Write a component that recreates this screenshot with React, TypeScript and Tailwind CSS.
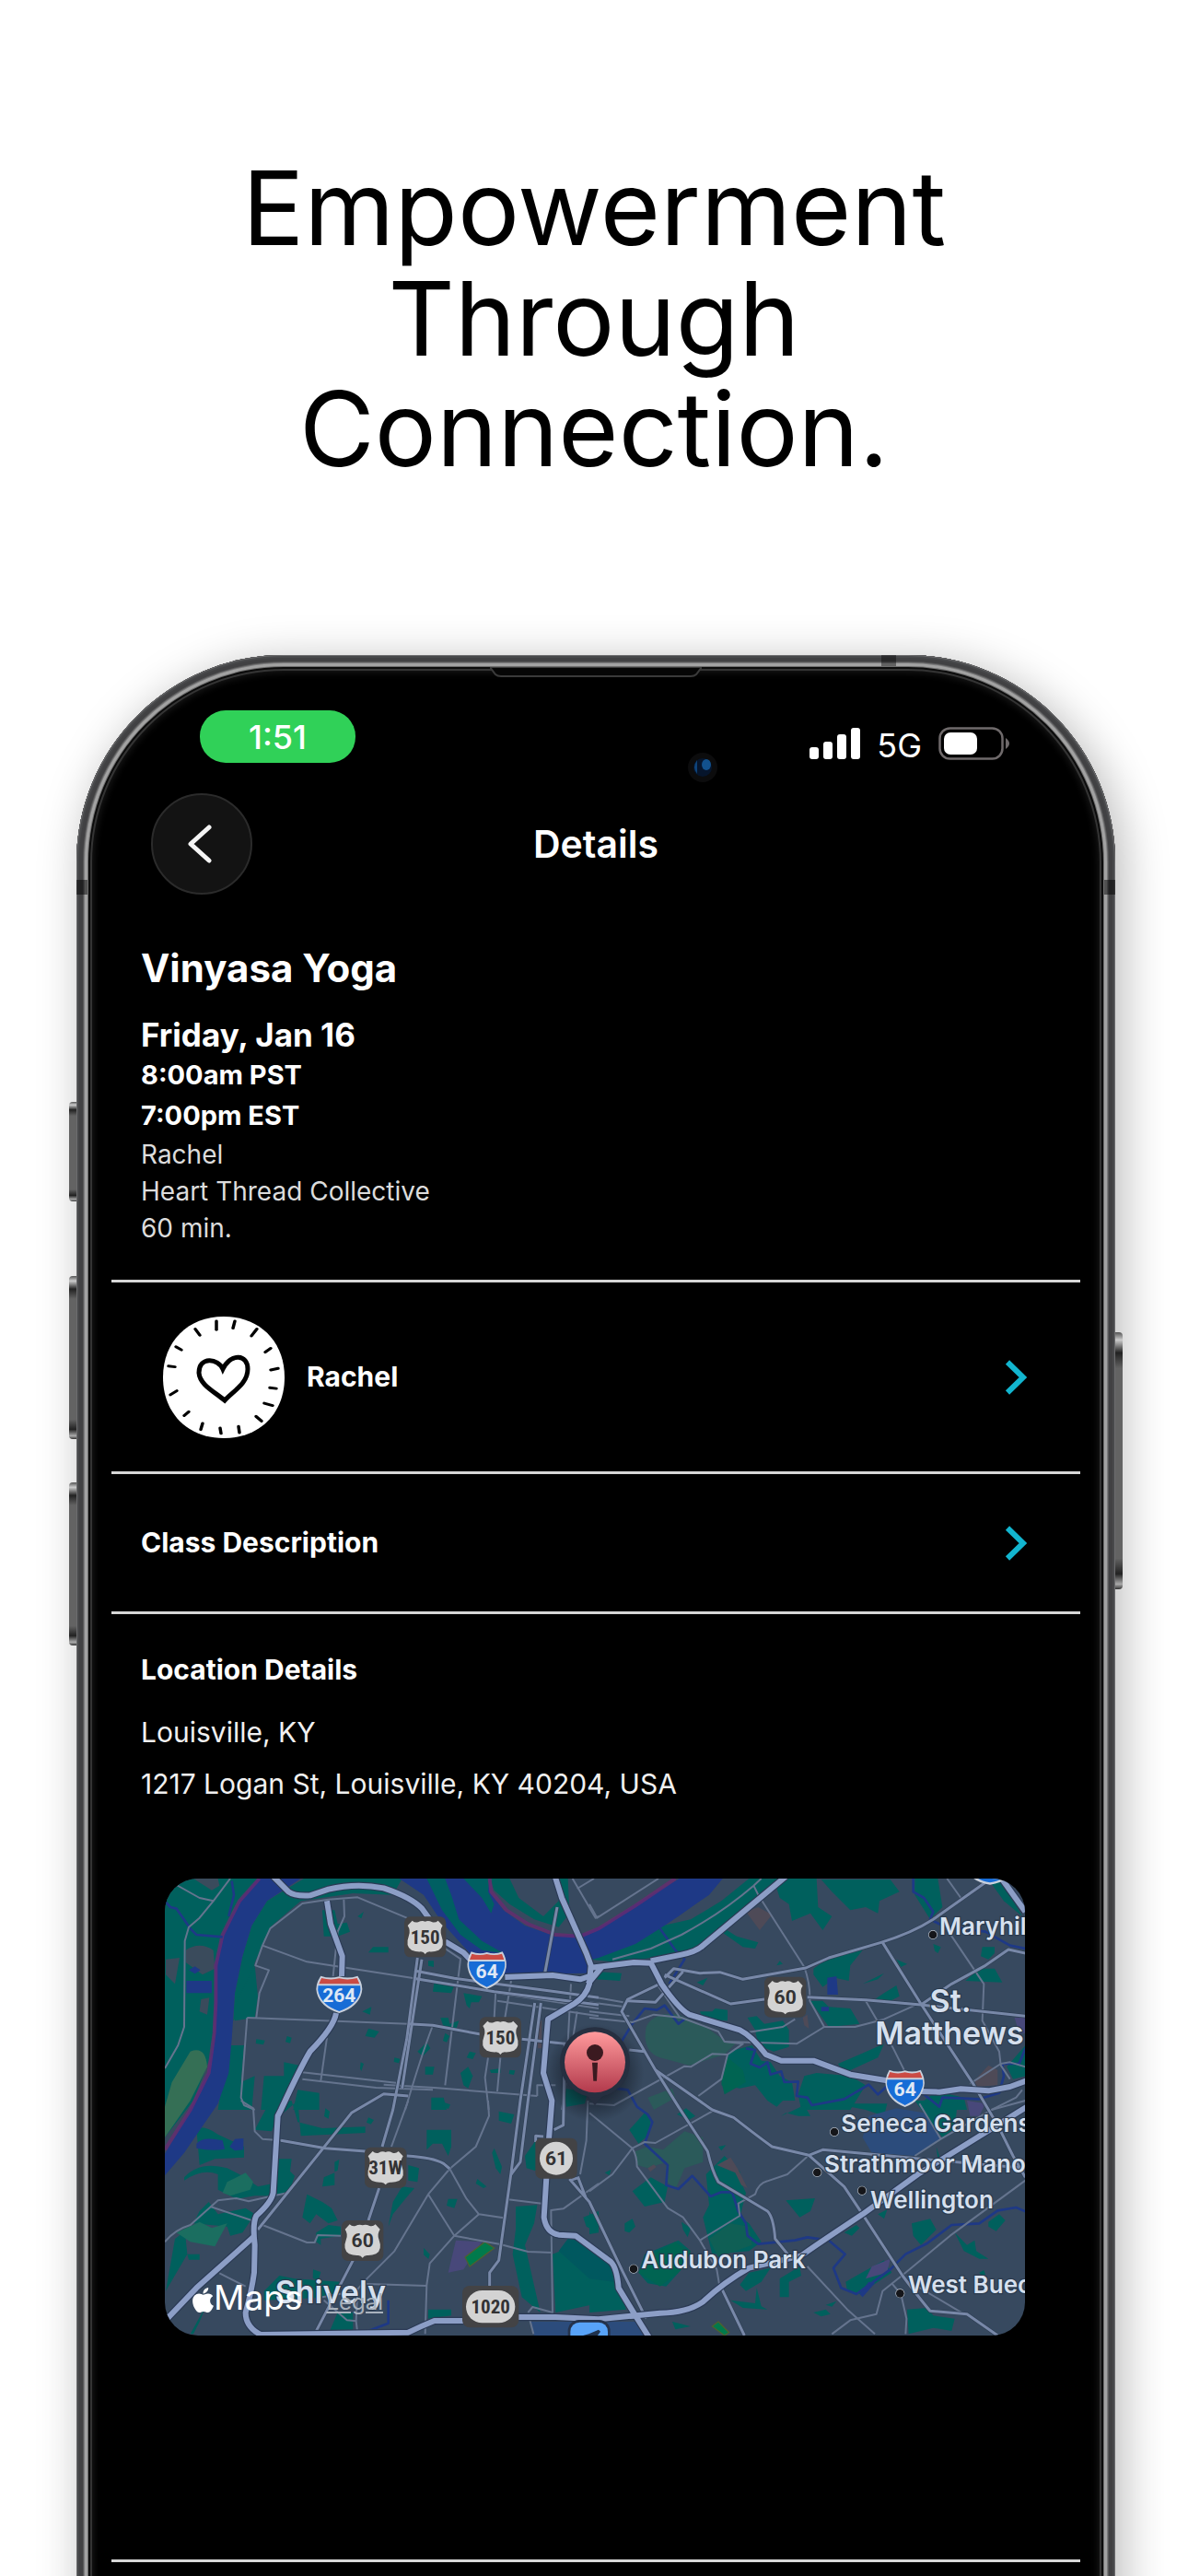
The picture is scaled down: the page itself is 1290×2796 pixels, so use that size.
import type { ReactNode } from "react";
import { FaApple } from "react-icons/fa";

type Point = { x: number; y: number };

const STREETS_NW = [
  "M60,75 L140,120 185,130 L240,57",
  "M185,130 L140,185 105,215 92,260 90,540 70,600 27,675",
  "M815,185 L655,118 560,125 475,138 370,220 345,275 322,340 366,355 335,430 325,510",
  "M345,275 L490,328 L840,382",
  "M610,125 L612,180 590,230 575,375",
  "M295,510 L820,530",
  "M295,510 L275,770 285,795 320,810",
  "M555,575 L535,715",
  "M475,688 L780,722 M475,710 L715,738 L900,745 M740,728 L905,738 L1240,765",
  "M990,320 L940,730",
  "M940,285 L992,320",
  "M898,540 Q860,640 810,810",
  "M1155,390 L1135,510 M1105,420 L1100,510 M1120,640 L1110,750 M1080,640 L1070,705 1082,810",
  "M1110,430 L1440,480 M1110,455 L1440,505 M1350,400 L1340,590 M1370,490 L1320,810",
  "M1355,57 L1430,185 1440,180 M1370,90 L1425,57",
  "M1240,765 L1240,730 1300,730",
];

const STREETS_NE = [
  "M0,140 L25,185 L225,57",
  "M75,320 L200,285 300,240 Q430,170 535,80 L560,57",
  "M535,80 L550,110 700,345 Q720,400 718,455 L765,540 675,595 440,588 420,555 300,510 210,500 140,525 0,510",
  "M500,560 L630,540 670,515",
  "M765,540 L865,540 960,515 1060,470",
  "M900,455 L990,610 1025,680",
  "M440,588 L500,595 450,630 400,628 330,670 310,668 80,795 0,790",
  "M450,630 L430,710 355,765",
  "M220,400 L295,510",
  "M1165,57 L1210,120 M1150,200 L1285,400 1280,520 1335,620 1340,665 1370,710",
  "M1240,725 L1340,660 1370,655 1420,670",
  "M1310,810 L1390,770 1410,745",
  "M0,440 L110,460 M0,460 L115,475 M0,490 L130,505",
];

const STREETS_SW = [
  "M275,0 L315,25 320,100 345,125 405,130",
  "M27,460 Q60,420 110,405 L200,325 260,318 300,328 380,310 430,300",
  "M175,345 L310,390 M345,405 L490,462 515,462 525,438 600,440",
  "M205,562 L290,605",
  "M820,0 L765,150",
  "M1080,0 L1083,50 1040,150 955,222 885,305 775,490 685,580 650,620 540,640",
  "M955,222 L1010,320 1050,370 1130,382",
  "M1050,370 L970,440 890,530 880,600 875,760",
  "M885,305 L970,440 1120,468 1210,492 1290,495",
  "M685,597 L880,603",
  "M1145,322 L1255,335 M1285,355 L1290,690 1225,672 1210,690",
  "M1285,357 L1325,352 1440,270",
  "M545,650 L620,715 650,718 655,610 M650,718 L655,760",
  "M1405,0 L1400,130 1380,240",
  "M1215,710 L1228,760",
];

const STREETS_SE = [
  "M0,40 L140,155 Q155,180 155,215 L255,350 305,380 360,455 415,550 425,610",
  "M0,295 L75,240 140,155 180,135 215,138 400,35",
  "M360,455 L490,375 485,335 540,305 Q550,270 580,262 L645,240 715,178",
  "M1075,10 L1145,125 1060,180 M1145,125 L1310,30 1420,0",
  "M790,760 L850,715 935,695 955,620 1030,560 1175,440 L1420,260",
  "M710,540 L840,680 930,760",
  "M985,595 L1015,630 1033,710 1030,760",
  "M1060,600 L1220,695",
];

const AVENUES = [
  "M850,315 L815,580 770,810 L735,930",
  "M864,320 L800,740",
  "M840,357 L970,382 1300,425 1440,445",
  "M845,383 L1100,425 1440,468",
  "M820,530 L900,535 1060,565 M1190,580 L1330,595",
  "M1232,462 L1185,780 1155,1015 1115,1300 1085,1340 1085,1385",
  "M1252,462 L1210,780 1185,980 1155,1020",
  "M1305,150 L1265,365",
  "M725,1065 L690,1170 M640,1300 L515,1540",
  "M820,765 L740,758 635,820 L330,1200",
  "M405,910 L550,935 680,945 M815,960 Q900,965 935,985 L955,1002",
  "M1330,590 L1325,860 1295,875 M1235,915 L1235,895 1260,897",
  "M1655,370 L1870,465 1980,450 M2120,443 L2310,452 2490,468 2830,505",
  "M1655,380 L1685,350 1770,365 1835,362 1910,385 2115,348 2190,315 2360,265 Q2460,235 2530,190 L2700,70",
  "M2365,265 L2490,465 2660,725 2740,860 2790,960 2830,1030",
  "M2490,468 L2590,400 2700,340 2775,288 2830,300",
  "M1650,395 L1535,450 1515,490 1625,680 1700,800 1795,945 Q1810,1010 1830,1045 L1990,1140 Q2010,1160 2015,1230 L2060,1285",
  "M1625,680 L1810,810 1880,835 Q1950,890 2005,930 L2125,958 2170,940 2490,970 2830,1000",
  "M1535,455 L1625,460 1715,360",
  "M2125,958 L2240,1060 2300,1150 2430,1350 Q2490,1430 2520,1465 L2640,1475 2740,1545",
  "M1345,1035 L1410,1110 1520,1340 1595,1490 M1375,1035 L1400,1100 M1345,1040 L1378,1030",
  "M1840,1390 L1915,1545 M1540,615 L1590,620",
];

const HIGHWAYS = [
  "M380,50 L430,100 Q450,115 500,112 L560,92 Q650,70 740,88 Q830,118 865,155 L890,190",
  "M940,262 L1000,298 1030,330 M1135,378 L1290,372 1380,385 1410,375",
  "M555,130 L567,205 605,310 603,375",
  "M585,495 Q578,540 500,620 Q470,670 405,810 L395,830 380,1080 Q375,1110 325,1155 Q312,1180 320,1250 L318,1340 Q310,1400 290,1470 Q290,1520 345,1545",
  "M30,1495 L130,1390 320,1220",
  "M340,1542 L820,1535 Q860,1515 905,1497 L1000,1497 M1175,1485 L1300,1485 1440,1492 1560,1480",
  "M1298,50 L1320,120 1400,300 1415,340 1410,400 Q1400,440 1360,465 L1275,515 1260,690 1288,780 1278,905",
  "M1270,1030 L1262,1160 Q1270,1210 1310,1217 L1365,1220 1480,1305 Q1500,1325 1505,1390 L1560,1480 1610,1560",
  "M1410,348 L1555,330 1610,332 Q1625,360 1645,400 Q1700,480 1735,500 L1900,550 Q1940,570 1985,630 L2035,650 2140,650 2260,695 2380,715",
  "M1405,400 L1450,345 M1610,325 L1710,305 Q1760,295 1780,275 L2050,50",
  "M2490,750 L2550,752 2620,742 2710,748 2780,735 2835,715",
  "M2755,60 L2830,165",
  "M1540,1482 L1640,1472 Q1730,1470 1780,1435 Q1850,1370 1930,1325 L2100,1285 Q2150,1250 2210,1210 L2300,1150 2480,1020 2835,800",
];

const CREEKS = [
  "M27,130 L45,150 65,155 110,220 130,240 215,247",
  "M245,65 L252,110 235,180",
  "M1470,660 L1550,530 1590,480 1630,485 1655,470 1700,530 1720,515",
  "M1640,220 L1690,290 1720,320 1670,400",
  "M1495,740 L1535,745 1565,800 1600,825 1615,850 1590,920 1665,990 1660,1055 1700,1068 1745,1025 1805,1092 1840,1078 1875,1078 1895,1140 1920,1180 1925,1220 1960,1247 2080,1235 2120,1225 2190,1235 2243,1280 2205,1325 2230,1390 2280,1410 2390,1330 2440,1280 2510,1245 2590,1185 2680,1180 2740,1138 2800,1128 2835,1143",
  "M1920,610 L1950,615 1935,660 1965,672 1990,655 2000,695 2035,685 2045,720 2090,718 2085,765 2120,770 2135,795 2240,775 2320,728 2350,760 2400,715",
  "M2465,57 L2465,100 2500,120 2530,165 2520,190 2560,210 2700,230 2780,275 2830,285",
  "M2500,760 L2550,800 2560,770 2680,775 2745,755 2760,700 2755,660 2810,660 2830,610",
  "M690,1530 L755,1505 755,1430",
];

const PARKS_NW = [
  "M27,57 H335 L270,130 215,240 190,340 190,460 182,620 120,780 27,900 Z",
  "M480,57 H800 L770,110 640,105 470,130 370,215 320,330 300,430 270,500 250,520 255,430 280,310 310,210 360,130 Z",
  "M330,440 L320,510 255,520 260,460 320,340 Z",
  "M1085,57 H1340 L1345,170 1310,215 1230,190 1150,140 1100,95 Z",
  "M905,390 L970,405 960,430 900,425 Z",
  "M925,510 l25,0 5,20 30,-10 -10,30 -40,-10 z",
  "M1000,430 L1060,440 1050,460 1025,460 1020,480 1010,470 Z",
  "M230,600 L285,600 275,720 320,700 310,810 200,810 Z",
  "M350,700 L415,700 415,655 465,665 430,770 410,810 340,810 Z",
  "M460,745 L530,755 530,810 445,810 Z",
  "M705,280 h50 v18 h-65 z",
  "M540,160 l40,0 10,45 30,-5 10,30 -40,15 -45,0 z",
  "M690,545 l35,10 -15,20 -30,-5 z",
  "M850,620 l30,-30 12,20 -25,25 z",
  "M875,670 l30,0 -5,25 -25,0 z",
  "M670,490 l30,-15 -5,25 z",
  "M655,180 l20,-15 -8,22 z",
  "M940,560 l15,10 -10,20 -12,-5 z",
  "M990,690 l25,-20 15,30 -15,40 -15,-10 z",
  "M1085,680 l35,-5 0,15 -30,0 z",
  "M1020,620 l20,5 -10,20 -20,-5 z",
  "M895,770 l40,0 10,40 -50,0 z",
  "M325,580 l28,4 -5,14 -25,-4 z",
  "M425,570 l15,5 -5,18 -15,-4 z",
  "M1150,680 l18,2 -4,14 -16,-3 z",
  "M885,325 l18,0 0,20 -18,-4 z",
  "M1325,740 l80,10 -10,40 -60,10 z",
  "M665,655 l10,5 -8,24 -4,-8 z",
  "M775,640 l18,4 -4,14 -16,-4 z",
];

const PARKS_NE = [
  "M0,320 L240,210 330,190 430,130 520,57 H560 L640,60 510,160 370,270 300,300 100,330 Z",
  "M600,57 H740 L745,150 790,180 760,225 720,170 660,195 650,140 620,120 Z",
  "M755,60 H980 L1010,100 945,130 940,170 900,150 850,160 790,100 Z",
  "M1060,57 H1135 L1150,150 1110,190 1060,110 Z",
  "M440,220 L480,245 550,265 540,285 500,280 430,230 Z",
  "M730,350 L780,315 890,290 850,340 845,390 800,380 760,410 730,370 Z",
  "M720,455 L760,455 780,475 850,480 880,530 780,540 Z",
  "M960,430 L1000,405 1010,440 980,455 930,450 Z",
  "M890,400 L960,365 940,385 Z",
  "M1000,320 l35,15 -20,10 z",
  "M1225,390 L1270,350 1320,350 1345,395 Z",
  "M1120,270 l25,10 -10,20 -10,-8 z",
  "M1280,280 l40,0 0,20 -20,20 -25,-10 z",
  "M515,510 l30,-5 25,25 60,-10 20,30 0,55 -50,15 -50,-20 -10,-50 z",
  "M360,490 L400,490 410,480 450,485 450,520 370,515 Z",
  "M455,620 L530,600 560,650 590,655 620,700 660,720 670,780 630,780 610,800 580,780 540,730 490,740 430,730 Z",
  "M810,660 L880,630 960,595 940,640 830,690 Z",
  "M700,700 L740,690 850,700 900,730 850,810 690,810 680,760 Z",
  "M1090,780 L1130,750 1220,770 1230,810 1080,810 Z",
  "M1360,670 L1420,600 1420,700 1380,710 Z",
  "M350,395 l35,-15 -15,25 z",
  "M610,340 l10,-15 10,10 z",
  "M20,360 l85,5 -5,25 -80,-5 z",
  "M1300,60 L1345,65 1410,180 1350,130 Z",
  "M80,280 L220,230 210,260 100,290 Z",
];

const PARKS_SW = [
  "M27,0 H60 L27,90 Z",
  "M360,20 L390,10 440,0 460,70 540,90 680,85 680,105 470,115 460,0 390,60 375,100 320,95 Z",
  "M130,90 Q160,80 200,110 L285,150 285,185 190,190 140,210 Z",
  "M90,250 Q140,195 230,220 L270,240 330,280 380,270 390,190 440,190 435,230 450,245 435,290 395,310 320,310 260,320 200,290 200,240 Q150,220 90,260 Z",
  "M170,330 L200,370 290,350 320,370 280,430 240,440 230,410 120,400 140,360 Z",
  "M100,420 L60,450 30,620 100,500 95,450 Z",
  "M490,305 L540,330 570,350 590,390 560,400 520,370 500,400 475,380 Z",
  "M520,430 L560,405 600,410 600,440 535,450 535,470 520,460 Z",
  "M545,250 l35,-15 0,40 -40,5 z",
  "M580,200 l15,-8 -5,35 -10,5 z",
  "M880,95 L960,95 960,150 950,180 930,140 900,140 880,160 Z",
  "M820,210 L855,220 850,265 820,260 Z",
  "M800,280 L840,285 810,320 770,370 755,410 770,330 Z",
  "M1115,35 L1165,45 1155,75 1115,65 Z",
  "M1170,345 L1240,340 1230,400 1200,470 1250,690 1190,640 1160,500 1170,420 Z",
  "M1390,380 L1440,360 1440,430 1400,410 Z",
  "M1100,155 l25,60 -5,25 -15,-20 -12,-50 z",
  "M950,320 l30,0 -10,30 -25,-8 z",
  "M510,550 l25,8 -8,30 -18,-10 z",
  "M350,620 L400,570 450,580 600,590 580,640 350,650 Z",
  "M590,690 L640,690 640,760 560,760 Z",
  "M885,680 L960,680 960,700 885,710 Z",
  "M1290,500 L1340,480 1440,490 1440,660 1300,690 Z",
  "M110,760 L160,670 140,720 120,760 Z",
  "M1045,255 l30,25 -10,5 -25,-15 z",
  "M935,5 l22,8 -6,14 -20,-6 z",
  "M1200,180 L1235,130 1240,230 1205,220 Z",
  "M870,480 l20,20 -4,16 -16,-14 z",
  "M690,55 l18,8 -10,14 -14,-6 z",
  "M550,25 l14,10 -4,24 -14,-8 z",
  "M100,500 h40 v18 h-35 z",
];

const PARKS_SE = [
  "M0,360 L30,430 0,435 Z",
  "M130,95 L180,40 200,60 195,110 160,140 Z",
  "M140,295 L200,250 255,280 245,330 180,345 Z",
  "M380,240 L440,180 490,230 500,280 510,300 490,380 520,400 560,460 520,490 400,500 370,380 390,340 Z",
  "M115,400 L140,385 150,410 130,430 115,425 Z",
  "M640,325 L735,318 720,360 685,380 Z",
  "M0,470 L70,530 90,600 120,680 0,690 Z",
  "M160,560 L180,500 290,455 330,490 300,550 250,605 190,595 Z",
  "M625,50 L700,15 720,50 680,50 640,40 Z",
  "M285,45 l30,-20 30,25 -20,12 z",
  "M520,560 L590,545 560,590 510,620 490,600 Z",
  "M620,580 L685,540 690,570 650,590 650,640 620,640 Z",
  "M460,650 L540,660 545,610 560,670 580,680 500,675 Z",
  "M835,590 L870,570 960,520 985,560 880,630 840,620 Z",
  "M1050,400 L1110,385 1130,420 1080,470 1055,440 Z",
  "M1190,430 L1230,470 1255,455 1260,490 1300,515 1270,515 1220,490 Z",
  "M1300,395 l35,-25 20,20 -30,35 -25,-15 z",
  "M1035,680 L1100,675 1120,700 1190,710 1180,750 1120,740 1040,760 Z",
  "M830,430 l40,-25 10,10 -25,25 z",
  "M940,370 l30,-15 -10,30 z",
  "M1060,0 H1200 L1190,90 1150,120 Z",
  "M820,10 H970 L960,50 900,30 850,20 Z",
  "M730,690 l40,-10 15,15 -30,8 z",
  "M770,665 l35,-12 -15,18 z",
  "M1270,560 l15,-8 5,14 -12,5 z",
  "M300,395 l30,20 -10,30 -15,-25 z",
  "M50,235 l20,-10 -5,18 z",
  "M420,150 l25,-5 -15,18 z",
  "M1130,150 l20,60 -15,-20 z",
  "M270,720 l60,15 -50,10 z",
];

const CLAY_PATCHES = [
  "M1920,165 L1960,150 2005,175 1965,225 Z",
  "M2665,715 L2710,665 2740,680 2740,730 2670,735 Z",
  "M2105,510 l15,-10 5,45 -15,-10 z",
  "M1825,990 l45,-25 25,40 30,60 -20,-10 -20,-40 z",
  "M1600,1000 l20,-12 8,8 -20,16 z",
  "M1245,520 l10,0 0,90 -14,0 z",
];

const TOWNS = [
  { name: "Maryhill Estates", dot: { x: 2529, y: 240 }, text: { x: 2550, y: 241 } },
  { name: "Seneca Gardens", dot: { x: 2208, y: 882 }, text: { x: 2230, y: 882 } },
  { name: "Strathmoor Manor", dot: { x: 2152, y: 1014 }, text: { x: 2175, y: 1013 } },
  { name: "Wellington", dot: { x: 2298, y: 1073 }, text: { x: 2325, y: 1132 } },
  { name: "Audubon Park", dot: { x: 1554, y: 1328 }, text: { x: 1579, y: 1327 } },
  { name: "West Buechel", dot: { x: 2422, y: 1408 }, text: { x: 2448, y: 1407 } },
];

const TICKS = [
  "M58,6 l0,11",
  "M78,6 l-2,9",
  "M102,16 l-6,9",
  "M117,41 l-6,5",
  "M125,67 l-8,2",
  "M123,93 l-7,-1",
  "M119,115 l-9,-3",
  "M107,135 l-6,-6",
  "M83,150 l-1,-8",
  "M63,151 l-1,-7",
  "M41,146 l2,-8",
  "M23,128 l5,-5",
  "M8,101 l7,-5",
  "M6,64 l7,1",
  "M14,39 l6,4",
  "M35,16 l5,8",
];

function Strokes({ paths, color, width }: { paths: string[]; color: string; width: number }) {
  return (
    <g fill="none" stroke={color} strokeWidth={width} strokeLinejoin="round">
      {paths.map((d) => (
        <path key={d} d={d} />
      ))}
    </g>
  );
}

function Fills({ paths, color }: { paths: string[]; color: string }) {
  return (
    <g fill={color}>
      {paths.map((d) => (
        <path key={d} d={d} />
      ))}
    </g>
  );
}

function ShieldText({
  children,
  color = "#333335",
  y = 22,
  narrow = false,
}: {
  children: ReactNode;
  color?: string;
  y?: number;
  narrow?: boolean;
}) {
  return (
    <text
      y={y}
      textAnchor="middle"
      fontSize="63"
      fontWeight="700"
      fill={color}
      className={
        narrow
          ? "font-['Liberation_Sans_Narrow','Roboto_Condensed',Roboto,sans-serif]"
          : "font-[Roboto,sans-serif]"
      }
    >
      {children}
    </text>
  );
}

function UsShield({ x, y, label }: Point & { label: string }) {
  return (
    <g transform={`translate(${x} ${y})`}>
      <rect x="-68" y="-66" width="136" height="132" rx="20" fill="#434345" />
      <path
        d="M-42,-53 Q-34,-45 -23,-48 Q-10,-55 0,-50 Q10,-55 23,-48 Q34,-45 42,-53 L57,-37 Q47,-22 53,-5 Q66,30 44,43 Q30,49 14,48 Q5,49 0,56 Q-5,49 -14,48 Q-30,49 -44,43 Q-66,30 -53,-5 Q-47,-22 -57,-37 Z"
        fill="#d3d3d3"
      />
      <ShieldText narrow={label.length > 2}>{label}</ShieldText>
    </g>
  );
}

function InterstateShield({ x, y, label, wide = false }: Point & { label: string; wide?: boolean }) {
  return (
    <g transform={`translate(${x} ${y})`}>
      <g transform={wide ? "scale(1.18 1)" : undefined}>
        <path
          d="M-51,-60 Q-26,-50 0,-58 Q26,-50 51,-60 Q68,-30 62,-5 Q52,42 0,61 Q-52,42 -62,-5 Q-68,-30 -51,-60 Z"
          fill="#c9d0dc"
        />
        <path d="M-49,-53 Q-24,-45 0,-52 Q24,-45 49,-53 L56,-34 H-56 Z" fill="#cb4b44" />
        <path d="M-58,-28 H58 Q60,-14 57,-4 Q46,37 0,55 Q-46,37 -57,-4 Q-60,-14 -58,-28 Z" fill="#176cd6" />
      </g>
      <ShieldText color="#dfe8f5" y={26}>
        {label}
      </ShieldText>
    </g>
  );
}

function MapCanvas() {
  return (
    <svg viewBox="27 57 2802 1488" preserveAspectRatio="xMidYMid slice" className="block size-full" role="img" aria-label="Map of Louisville">
      <defs>
        <linearGradient id="pin" x1="0" y1="0" x2="0" y2="1">
          <stop offset="0" stopColor="#ff9a9c" />
          <stop offset="1" stopColor="#b23a4c" />
        </linearGradient>
        <radialGradient id="pinShade">
          <stop offset="0.5" stopColor="#10161f" stopOpacity="0.6" />
          <stop offset="1" stopColor="#10161f" stopOpacity="0" />
        </radialGradient>
      </defs>
      <rect x="27" y="57" width="2802" height="1488" fill="#37495f" />

      <Fills paths={PARKS_NW} color="#00605d" />
      <g transform="translate(1410 0)">
        <Fills paths={PARKS_NE} color="#00605d" />
      </g>
      <g transform="translate(0 780)">
        <Fills paths={PARKS_SW} color="#00605d" />
      </g>
      <g transform="translate(1410 780)">
        <Fills paths={PARKS_SE} color="#00605d" />
      </g>

      {/* cut-outs and tinted ground */}
      <path d="M95,290 Q140,260 185,290 L190,350 150,370 95,330 Z M120,57 L200,57 205,80 180,95 Z M30,320 L75,315 60,400 30,370 Z M145,450 L172,445 165,500 140,490 Z" fill="#3a4b5c" />
      <path d="M1150,57 H1300 L1310,130 1260,180 1180,120 Z" fill="#37495f" />
      <path d="M110,620 Q160,600 165,670 L110,780 27,900 27,800 50,720 Z" fill="#356f55" />
      <path d="M215,1080 L230,1045 290,1015 315,1045 305,1070 240,1090 Z M65,1210 L140,1175 180,1195 230,1180 190,1255 110,1240 Z" fill="#1b6e60" />
      <path d="M1595,540 Q1620,490 1700,500 L1790,540 1850,585 1890,590 1850,630 1735,665 1640,640 Q1580,620 1595,540 Z M1600,770 L1680,740 1690,770 1620,810 Z M1560,945 L1600,930 1650,940 1720,880 1780,900 1780,980 1720,1000 1690,1070 1660,1040 1660,980 1600,1000 1565,990 Z" fill="#2b5a5a" />
      <path d="M1800,1230 L1870,1180 1930,1190 1940,1250 1830,1290 Z" fill="#0f5f55" />
      <path d="M1570,1340 L1600,1290 1690,1240 1740,1275 1700,1340 1640,1385 Z M1860,640 L1910,680 1920,720 1850,760 1840,720 Z" fill="#006452" />
      <path d="M2300,900 L2320,830 2410,805 2500,820 2555,905 2470,960 2330,950 Z" fill="#2c4c7c" />
      <path d="M1220,1500 H1570 L1610,1545 H1230 Z" fill="#2c4c7c" />
      <path d="M975,1235 L1060,1240 1000,1330 950,1340 Z M2330,1320 L2390,1295 2380,1340 2310,1360 Z M2640,780 L2700,790 2680,830 2650,830 Z M2795,510 h35 v50 h-20 z" fill="#48487a" />
      <path d="M1005,1290 L1070,1240 1100,1260 1020,1320 Z M1810,1515 L1830,1500 1865,1535 1850,1545 Z" fill="#007a4c" stroke="#4d6030" strokeWidth="4" />
      <path d="M1310,1270 L1340,1230 1410,1240 1470,1290 1490,1370 1410,1360 Z" fill="#00585f" />
      <Fills paths={CLAY_PATCHES} color="#4e4a57" />

      {/* river */}
      <path
        d="M335,50 H480 L360,130 310,210 280,310 255,430 245,580 235,690 200,790 90,950 20,1032 20,965 110,810 170,680 190,560 190,340 215,240 270,130 Z"
        fill="#1e3986"
      />
      <path
        d="M780,50 H1085 L1085,100 1130,160 1200,210 1300,245 1400,235 1470,200 1560,140 1715,50 H1850 L1800,110 1700,180 1640,220 1560,270 1440,315 1420,320 1400,365 1130,370 1020,300 930,200 870,110 Z"
        fill="#1e3986"
      />
      <path d="M880,57 H940 L960,110 985,190 1060,260 1130,300 1060,290 990,240 930,160 Z M1000,57 H1085 L1080,100 1100,140 1090,170 1060,120 Z" fill="#005f62" />
      <path d="M97,390 L180,390 180,430 97,430 Z M130,920 Q150,895 215,910 L222,938 Q180,945 130,935 Z M238,930 L255,905 283,903 283,940 255,943 Z M105,355 l20,-12 18,12 -18,12 z M2185,380 l30,-5 5,60 -35,0 z M2165,475 l25,0 0,14 -25,0 z M2290,1410 L2320,1370 2340,1375 2300,1420 Z" fill="#1e3986" />
      <g fill="none" stroke="#6b2a70" strokeWidth="12" opacity="0.75">
        <path d="M335,57 L270,130 215,240 193,340 193,460 188,560 170,690 110,810 27,940" />
        <path d="M1085,57 L1090,100 1140,160 1210,205 1300,240 1380,245 1440,220 1560,145 1690,57" />
      </g>
      <Strokes paths={CREEKS} color="#1e3986" width={8} />

      <Strokes paths={STREETS_NW} color="#65748e" width={6} />
      <g transform="translate(1410 0)">
        <Strokes paths={STREETS_NE} color="#65748e" width={6} />
      </g>
      <g transform="translate(0 780)">
        <Strokes paths={STREETS_SW} color="#65748e" width={6} />
      </g>
      <g transform="translate(1410 780)">
        <Strokes paths={STREETS_SE} color="#65748e" width={6} />
      </g>
      <Strokes paths={AVENUES} color="#2f3f55" width={13} />
      <Strokes paths={AVENUES} color="#7888a8" width={9} />
      <Strokes paths={HIGHWAYS} color="#2b3a55" width={25} />
      <Strokes paths={HIGHWAYS} color="#8c9ec6" width={18} />

      <UsShield x={875} y={247} label="150" />
      <UsShield x={1120} y={574} label="150" />
      <UsShield x={2048} y={443} label="60" />
      <UsShield x={746} y={998} label="31W" />
      <UsShield x={671} y={1236} label="60" />
      <g transform="translate(1302 968)">
        <rect x="-68" y="-66" width="136" height="132" rx="20" fill="#434345" />
        <circle r="54" fill="#d3d3d3" />
        <ShieldText>61</ShieldText>
      </g>
      <g transform="translate(1088 1451)">
        <rect x="-92" y="-68" width="184" height="136" rx="24" fill="#434345" />
        <rect x="-80" y="-53" width="160" height="106" rx="53" fill="#d3d3d3" />
        <ShieldText narrow>1020</ShieldText>
      </g>
      <InterstateShield x={595} y={434} label="264" wide />
      <InterstateShield x={1076} y={355} label="64" />
      <InterstateShield x={2438} y={740} label="64" />
      {/* only the tip of this one reaches into view */}
      <path d="M2655,50 H2775 Q2760,70 2715,77 Q2670,70 2655,50 Z" fill="#c9d0dc" />
      <path d="M2668,50 H2762 Q2750,64 2715,70 Q2680,64 2668,50 Z" fill="#176cd6" />

      <g transform="translate(1348 1502)">
        <rect x="-8" y="-8" width="138" height="90" rx="36" fill="#24324b" />
        <rect width="122" height="80" rx="30" fill="#58a3f8" />
        <path d="M30,46 L60,38 92,24 98,30 84,50 H34 Z" fill="#20324d" />
      </g>

      <g className="font-['Inter',sans-serif]" fill="#d6e0ee" stroke="#2b3a4e" strokeWidth="7" paintOrder="stroke" fontWeight="600">
        {TOWNS.map((town) => (
          <g key={town.name}>
            <circle cx={town.dot.x} cy={town.dot.y} r="13" fill="#15161a" stroke="#b9c0ca" strokeWidth="4" />
            <text x={town.text.x} y={town.text.y} fontSize="78">
              {town.name}
            </text>
          </g>
        ))}
        <text x="2586" y="492" fontSize="102" textAnchor="middle">
          St.
        </text>
        <text x="2583" y="598" fontSize="102" textAnchor="middle">
          Matthews
        </text>
        <text x="386" y="1440" fontSize="102">
          Shively
        </text>
      </g>

      <circle cx="1428" cy="690" r="160" fill="url(#pinShade)" />
      <path d="M1428,796 L1400,760 H1456 Z" fill="#262f40" />
      <circle cx="1428" cy="655" r="114" fill="#262f40" />
      <circle cx="1428" cy="655" r="99" fill="url(#pin)" />
      <circle cx="1428" cy="624" r="27" fill="#3b1a20" />
      <path d="M1419,656 H1437 L1434,716 H1423 Z" fill="#3b1a20" />
    </svg>
  );
}

function Chevron() {
  return (
    <svg viewBox="0 0 24 38" className="h-[38px] w-6" fill="none" stroke="#12b5cf" strokeWidth="6" aria-hidden="true">
      <path d="M3,2.500 L20,19 3,35.500" />
    </svg>
  );
}

function RachelAvatar() {
  return (
    <svg viewBox="0 0 132 132" className="size-[132px]" aria-hidden="true">
      <path d="M66,0 C105,0 132,27 132,66 C132,105 105,132 66,132 C27,132 0,105 0,66 C0,27 27,0 66,0 Z" fill="#fff" />
      <g transform="scale(1 0.840)" fill="none" stroke="#000" strokeWidth="3.500" strokeLinecap="round">
        {TICKS.map((d) => (
          <path key={d} d={d} />
        ))}
      </g>
      <path
        d="M65,57 C60,45 39,43 39,61 C40,74 55,81 67,91 C76,81 92,73 92,57 C92,41 74,39 65,57 Z"
        fill="none"
        stroke="#000"
        strokeWidth="5"
        strokeLinejoin="miter"
      />
    </svg>
  );
}

function StatusBar() {
  return (
    <div className="flex h-[57px] items-start justify-between pr-[76px] pl-24">
      <div className="flex h-[57px] w-[169px] items-center justify-center rounded-[28px] bg-[#30d158] text-[36px] leading-none font-medium">
        1:51
      </div>
      <div className="mt-[18px] flex h-9 items-center gap-[18px]">
        <svg viewBox="0 0 55 34" className="h-[34px] w-[55px]" fill="#fff" aria-label="Signal strength" role="img">
          <rect x="0" y="21" width="10" height="13" rx="3" />
          <rect x="15" y="15" width="10" height="19" rx="3" />
          <rect x="30" y="7" width="10" height="27" rx="3" />
          <rect x="45" y="0" width="10" height="34" rx="3" />
        </svg>
        <span className="pt-1 text-[36px] leading-none">5G</span>
        <svg viewBox="0 0 78 36" className="h-9 w-[78px]" aria-label="Battery" role="img">
          <rect x="1.500" y="1.500" width="68" height="33" rx="11" fill="none" stroke="#6f6a6b" strokeWidth="2.500" />
          <rect x="6" y="6" width="36" height="24" rx="7" fill="#fff" />
          <path d="M73,12 Q81,18 73,24 Z" fill="#6f6a6b" />
        </svg>
      </div>
    </div>
  );
}

function SideButton({ className }: { className: string }) {
  return (
    <span
      aria-hidden="true"
      className={`absolute w-2 bg-[linear-gradient(#555,#ccc_3%,#222_8%,#636363_14%,#636363_88%,#222_94%,#aaa_98%,#333)] ${className}`}
    />
  );
}

export default function App() {
  return (
    <main className="flex min-h-screen flex-col overflow-hidden bg-white font-['Inter',sans-serif] text-white">
      <h1 className="px-10 pt-[165px] text-center text-[112px] leading-[120px] text-black">
        Empowerment
        <br />
        Through
        <br />
        Connection.
      </h1>

      <div className="mt-[186px] -mb-20 flex flex-1 flex-col pr-[79px] pl-[83px]">
        <div className="relative flex flex-1 flex-col rounded-t-[225px] bg-black px-[38px] pt-[60px] pb-20 shadow-[8px_8px_50px_rgba(0,0,0,0.280),inset_0_0_0_1px_#6c6c6e,inset_0_0_0_3px_#48494b,inset_0_0_0_7px_#414143,inset_0_0_0_8px_#59595a,inset_0_0_0_9px_#7b7b7c,inset_0_0_0_12px_#a2a2a2,inset_0_0_0_13px_#6d6d6d,inset_0_0_0_15px_#0b0b0b,inset_0_0_0_17px_#343434,inset_0_0_8px_18px_#1c1c1c]">
          <SideButton className="top-[485px] -left-2 h-[108px] rounded-l-[4px]" />
          <SideButton className="top-[674px] -left-2 h-[177px] rounded-l-[4px]" />
          <SideButton className="top-[898px] -left-2 h-[177px] rounded-l-[4px]" />
          <SideButton className="top-[735px] -right-2 h-[279px] rounded-r-[4px]" />
          <span aria-hidden="true" className="absolute top-[244px] left-0 h-4 w-3 bg-black/50" />
          <span aria-hidden="true" className="absolute top-[244px] right-0 h-4 w-3 bg-black/50" />
          <span aria-hidden="true" className="absolute top-0 right-[238px] h-3 w-4 bg-black/40" />
          <svg viewBox="0 0 230 12" aria-hidden="true" className="absolute top-[13px] left-1/2 h-3 w-[230px] -translate-x-1/2">
            <path d="M0,0 L6,8 Q8,10 12,10 H218 Q222,10 224,8 L230,0 Z" fill="#060606" stroke="#3a3a3a" strokeWidth="2" />
          </svg>
          <svg viewBox="0 0 32 32" aria-hidden="true" className="absolute top-[106px] left-[664px] size-8">
            <circle cx="16" cy="16" r="16" fill="#0c0c0d" />
            <circle cx="16" cy="16" r="10" fill="#06152c" />
            <ellipse cx="20" cy="13" rx="5" ry="6" fill="#12518d" />
            <path d="M10,8 Q4,16 10,23 Z" fill="#0e437a" />
          </svg>

          <StatusBar />

          <header className="mt-[33px] grid grid-cols-[110px_1fr_110px] items-center px-[43px]">
            <button
              type="button"
              aria-label="Back"
              className="flex size-[110px] items-center justify-center rounded-full border-2 border-[#2b2b2b] bg-[#131313]"
            >
              <svg viewBox="0 0 26 42" className="mr-1 h-[42px] w-[26px]" fill="none" stroke="#f4f4f4" strokeWidth="5" strokeLinecap="round" strokeLinejoin="round">
                <path d="M23,3 L3,21 23,39" />
              </svg>
            </button>
            <h2 className="text-center text-[41px] leading-[56px] font-semibold">Details</h2>
          </header>

          <section className="mt-[52px] border-b-[3px] border-[#d6d6d6] px-8 pb-9 text-[28px]">
            <h3 className="mb-[22px] text-[42px] leading-[56px] font-bold">Vinyasa Yoga</h3>
            <p className="text-[35px] leading-[44px] font-bold">Friday, Jan 16</p>
            <p className="text-[29px] leading-[44px] font-bold">8:00am PST</p>
            <p className="text-[29px] leading-[44px] font-bold">7:00pm EST</p>
            <p className="leading-[40px] text-[#dcdcdc]">Rachel</p>
            <p className="leading-[40px] text-[#dcdcdc]">Heart Thread Collective</p>
            <p className="leading-[40px] text-[#dcdcdc]">60 min.</p>
          </section>

          <button
            type="button"
            className="flex h-[208px] items-center border-b-[3px] border-[#d6d6d6] pr-[58px] pl-14 text-left text-[30px] font-bold"
          >
            <RachelAvatar />
            <span className="ml-6 flex-1">Rachel</span>
            <Chevron />
          </button>

          <button
            type="button"
            className="flex h-[152px] items-center justify-between border-b-[3px] border-[#d6d6d6] pr-[58px] pl-8 text-left text-[30px] font-bold"
          >
            Class Description
            <Chevron />
          </button>

          <section className="border-b-[3px] border-[#d6d6d6] pt-8 pb-[243px] text-[30px] leading-[56px]">
            <h3 className="mb-3 px-8 font-bold">Location Details</h3>
            <p className="px-8 text-[#f0f0f0]">Louisville, KY</p>
            <p className="px-8 text-[#f0f0f0]">1217 Logan St, Louisville, KY 40204, USA</p>

            <div className="relative mt-[75px] mr-[60px] ml-[58px] aspect-[934/496] overflow-hidden rounded-[36px]">
              <MapCanvas />
              <div className="absolute bottom-[14px] left-[26px] flex items-baseline leading-[44px]">
                <FaApple aria-hidden="true" className="size-[31px] self-center" />
                <span className="-ml-1 text-[37px]">Maps</span>
                <a href="#legal" className="ml-[26px] text-[24px] text-[#a9b2bd] underline">
                  Legal
                </a>
              </div>
            </div>
          </section>
        </div>
      </div>
    </main>
  );
}
